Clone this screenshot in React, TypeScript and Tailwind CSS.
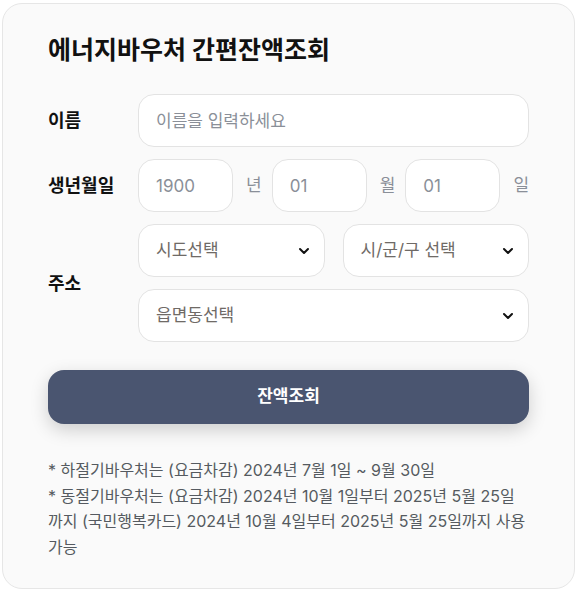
import { ChevronDown } from 'lucide-react';

const font = { fontFamily: '"Inter", "Noto Sans CJK KR", sans-serif' };

function DateBox({ value, unit }: { value: string; unit: string }) {
  return (
    <div className="flex min-w-0 flex-1 items-center gap-[13px]">
      <input
        defaultValue={value}
        className="h-[53px] w-full min-w-0 rounded-2xl border border-[#e3e3e3] bg-white px-[17px] text-[17px] text-[#8a8f98] outline-none"
      />
      <span className="shrink-0 text-[17px] text-[#8a8f98]">{unit}</span>
    </div>
  );
}

function Select({ label, className }: { label: string; className?: string }) {
  return (
    <div
      className={`flex h-[53px] items-center justify-between rounded-2xl border border-[#e3e3e3] bg-white pl-[17px] pr-[12px] ${className ?? ''}`}
    >
      <span className="text-[17px] text-[#6f6a66]">{label}</span>
      <ChevronDown className="h-4 w-4 text-[#111]" strokeWidth={3} />
    </div>
  );
}

export default function App() {
  return (
    <div className="min-h-screen bg-white p-[2px] pt-[3px]" style={font}>
      <div className="rounded-[20px] border border-[#e6e6e6] bg-[#fafafa] px-[45px] pt-[30px] pb-[28px]">
        <h1 className="text-[25px] font-bold leading-8 text-[#111]">에너지바우처 간편잔액조회</h1>

        <div className="mt-[28px] flex flex-col gap-[12px]">
          <div className="flex items-center">
            <label className="w-[90px] shrink-0 text-[18px] font-bold text-[#111]">이름</label>
            <input
              placeholder="이름을 입력하세요"
              className="h-[53px] min-w-0 flex-1 rounded-2xl border border-[#e3e3e3] bg-white px-[17px] text-[17px] outline-none placeholder:text-[#8a8f98]"
            />
          </div>

          <div className="flex items-center">
            <label className="w-[90px] shrink-0 text-[18px] font-bold text-[#111]">생년월일</label>
            <div className="flex flex-1 items-center gap-[10px]">
              <DateBox value="1900" unit="년" />
              <DateBox value="01" unit="월" />
              <DateBox value="01" unit="일" />
            </div>
          </div>

          <div className="flex items-center">
            <label className="w-[90px] shrink-0 text-[18px] font-bold text-[#111]">주소</label>
            <div className="flex flex-1 flex-col gap-[12px]">
              <div className="flex gap-[18px]">
                <Select label="시도선택" className="flex-1" />
                <Select label="시/군/구 선택" className="flex-1" />
              </div>
              <Select label="읍면동선택" />
            </div>
          </div>
        </div>

        <button className="mt-[28px] h-[54px] w-full rounded-2xl bg-[#4a5570] text-[17px] font-bold text-white shadow-[0_6px_18px_rgba(0,0,0,0.18)]">
          잔액조회
        </button>

        <div className="mt-[34px] text-[16px] leading-[25.5px] text-[#555a60]">
          <p>* 하절기바우처는 (요금차감) 2024년 7월 1일 ~ 9월 30일</p>
          <p>
            * 동절기바우처는 (요금차감) 2024년 10월 1일부터 2025년 5월 25일까지 (국민행복카드) 2024년 10월 4일부터 2025년 5월
            25일까지 사용 가능
          </p>
        </div>
      </div>
    </div>
  );
}
